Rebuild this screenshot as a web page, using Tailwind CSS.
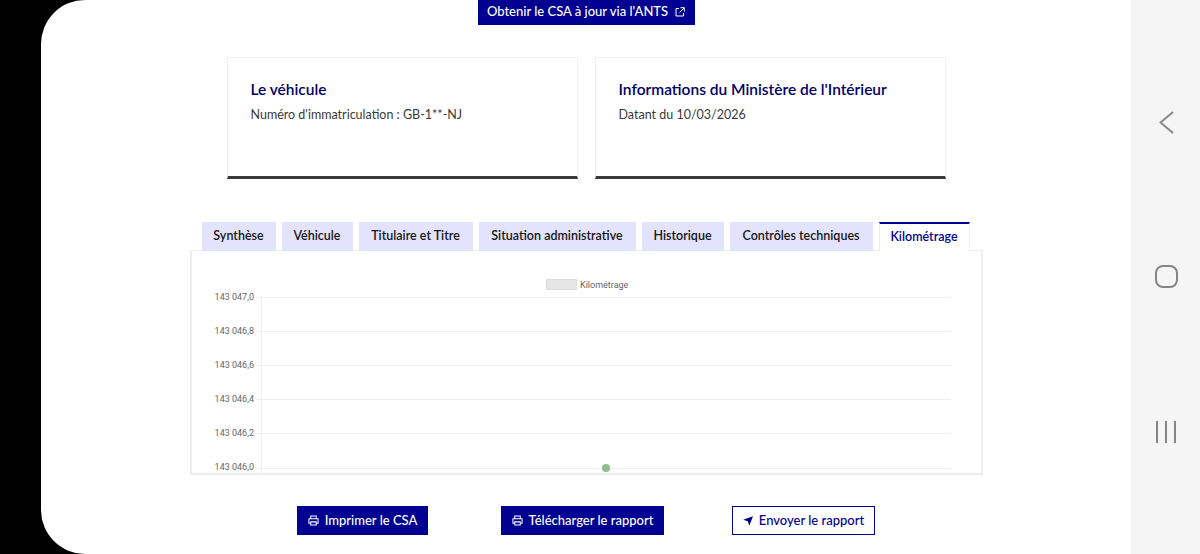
<!DOCTYPE html>
<html lang="fr">
<head>
    <meta charset="UTF-8">
    <title>Kilométrage</title>
    <script src="https://cdn.jsdelivr.net/npm/@tailwindcss/browser@4"></script>
</head>
<body class="bg-black font-['Lato',sans-serif]">
    <div class="flex h-[554px] w-[1200px] overflow-hidden bg-black">
        <!-- Phone screen -->
        <main class="flex w-[1090px] ml-[41px] flex-col items-center rounded-l-[44px] bg-white">
            <a class="flex h-[25px] w-[217px] items-start justify-center gap-[7px] bg-[#000091] pt-[2px] text-[13px] leading-[18px] font-medium text-white" href="#">
                Obtenir le CSA à jour via l'ANTS
                <svg class="mt-[5px] h-[10px] w-[10px]" viewBox="0 0 10 10" fill="none" stroke="white" stroke-width="1"><path d="M4 1.500H1v7.500h7.500V6"/><path d="M5.500 .7h3.800v3.800M9.200 .8 4.500 5.500"/></svg>
            </a>

            <!-- Cards -->
            <div class="mt-[32px] flex gap-[17px]">
                <section class="h-[122px] w-[351px] border border-b-[3px] border-[#f0f0f0] border-b-[#3a3a3a] px-[23px] pt-[21px]">
                    <h2 class="text-[15.500px] leading-[20px] font-semibold text-[#000068]">Le véhicule</h2>
                    <p class="mt-[6px] text-[12.500px] leading-[20px] text-[#3a3a3a]">Numéro d'immatriculation : GB-1**-NJ</p>
                </section>
                <section class="h-[122px] w-[351px] border border-b-[3px] border-[#f0f0f0] border-b-[#3a3a3a] px-[23px] pt-[21px]">
                    <h2 class="text-[15.500px] leading-[20px] font-semibold text-[#000068]">Informations du Ministère de l'Intérieur</h2>
                    <p class="mt-[6px] text-[12.500px] leading-[20px] text-[#3a3a3a]">Datant du 10/03/2026</p>
                </section>
            </div>

            <!-- Tabs -->
            <div class="mt-[43px] flex w-[793px] flex-col">
                <div class="z-10 mb-[-1px] ml-[12px] flex h-[29px] gap-[6px] text-[12.500px] font-semibold text-[#161616]">
                    <div class="flex w-[74px] items-center justify-center bg-[#e3e3fd]">Synthèse</div>
                    <div class="flex w-[71px] items-center justify-center bg-[#e3e3fd]">Véhicule</div>
                    <div class="flex w-[114px] items-center justify-center bg-[#e3e3fd]">Titulaire et Titre</div>
                    <div class="flex w-[157px] items-center justify-center bg-[#e3e3fd]">Situation administrative</div>
                    <div class="flex w-[82px] items-center justify-center bg-[#e3e3fd]">Historique</div>
                    <div class="flex w-[143px] items-center justify-center bg-[#e3e3fd]">Contrôles techniques</div>
                    <div class="flex w-[91px] items-center justify-center border-x border-t-2 border-x-[#eeeeee] border-t-[#000091] bg-white text-[#000091]">Kilométrage</div>
                </div>

                <!-- Chart panel -->
                <div class="h-[225px] w-[793px] border-2 border-t border-[#eeeeee]">
                    <svg class="block h-full w-full font-['Roboto',sans-serif]" viewBox="0 0 789 222" font-size="9" fill="#666666">
                        <rect x="354.500" y="28.500" width="30" height="10" fill="#e6e6e6" stroke="#dddddd"/>
                        <text x="388" y="37">Kilométrage</text>
                        <g stroke="#eeeeee">
                            <path d="M64 46.500H759M64 80.500H759M64 114.500H759M64 148.500H759M64 182.500H759M64 217.500H759"/>
                            <path d="M69.500 46V222"/>
                        </g>
                        <g text-anchor="end">
                            <text x="62" y="49">143 047,0</text>
                            <text x="62" y="83">143 046,8</text>
                            <text x="62" y="117">143 046,6</text>
                            <text x="62" y="151">143 046,4</text>
                            <text x="62" y="185">143 046,2</text>
                            <text x="62" y="219">143 046,0</text>
                        </g>
                        <circle cx="414" cy="217" r="4" fill="#8fbc8f"/>
                    </svg>
                </div>
            </div>

            <!-- Actions -->
            <div class="mt-[31px] flex text-[13px] font-medium">
                <button class="flex h-[29px] w-[131px] items-center justify-center gap-[6px] bg-[#000091] text-white">
                    <svg class="h-[11px] w-[11px]" viewBox="0 0 12 12" fill="none" stroke="white" stroke-width="1.100"><path d="M3 4V1h6v3M3 9H1V4h10v5H9"/><path d="M3 7.500h6V11H3z"/></svg>
                    Imprimer le CSA
                </button>
                <button class="ml-[73px] flex h-[29px] w-[163px] items-center justify-center gap-[6px] bg-[#000091] text-white">
                    <svg class="h-[11px] w-[11px]" viewBox="0 0 12 12" fill="none" stroke="white" stroke-width="1.100"><path d="M3 4V1h6v3M3 9H1V4h10v5H9"/><path d="M3 7.500h6V11H3z"/></svg>
                    Télécharger le rapport
                </button>
                <button class="ml-[68px] flex h-[29px] w-[143px] items-center justify-center gap-[6px] border border-[#000091] text-[#000091]">
                    <svg class="h-[10px] w-[10px]" viewBox="0 0 10 10" fill="#000091"><path d="M10 .3 6.300 9.800 4.800 5.300.2 3.800z"/></svg>
                    Envoyer le rapport
                </button>
            </div>
        </main>

        <!-- Android navigation bar -->
        <nav class="flex w-[69px] flex-col items-center bg-[#f5f5f5] pt-[111px]">
            <svg class="ml-[1px] h-[23px] w-[15px]" viewBox="0 0 15 23" fill="none" stroke="#858585" stroke-width="1.800"><path d="M14 1 1.500 11.500 14 22"/></svg>
            <div class="mt-[131px] ml-[2px] h-[23px] w-[23px] rounded-[8px] border-2 border-[#858585]"></div>
            <div class="mt-[133px] ml-[1px] flex gap-[7px]">
                <span class="h-[22px] w-[2px] bg-[#858585]"></span>
                <span class="h-[22px] w-[2px] bg-[#858585]"></span>
                <span class="h-[22px] w-[2px] bg-[#858585]"></span>
            </div>
        </nav>
    </div>
</body>
</html>
